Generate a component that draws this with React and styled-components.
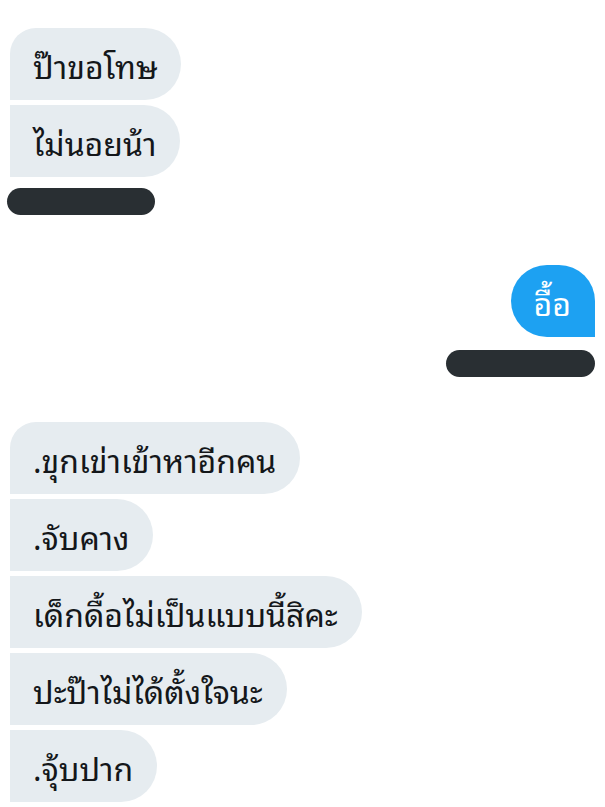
import React from "react";
import styled, { createGlobalStyle } from "styled-components";

const GlobalStyle = createGlobalStyle`
  html, body {
    margin: 0;
    padding: 0;
    background: #ffffff;
  }
  body {
    font-family: "Noto Sans Thai Looped", "Noto Sans", sans-serif;
  }
`;

const Page = styled.div`
  width: 605px;
  height: 807px;
  overflow: hidden;
  display: flex;
  flex-direction: column;
  padding-top: 28px;
  box-sizing: border-box;
`;

const Group = styled.div`
  display: flex;
  flex-direction: column;
  align-items: ${(p) => (p.$mine ? "flex-end" : "flex-start")};
  gap: 5px;
  padding: ${(p) => (p.$mine ? "0 10px 0 0" : "0 0 0 10px")};
  margin-bottom: ${(p) => p.$after || 0}px;
`;

const Bubble = styled.div`
  height: 72px;
  box-sizing: border-box;
  display: flex;
  align-items: center;
  padding: 0 24px 0 23px;
  font-size: 32px;
  white-space: nowrap;
  color: ${(p) => (p.$mine ? "#ffffff" : "#14171a")};
  background: ${(p) => (p.$mine ? "#1da1f2" : "#e6ecf0")};
  border-radius: ${(p) =>
    p.$mine
      ? "36px 36px 0 36px"
      : p.$first
      ? "26px 36px 36px 0"
      : "0 36px 36px 0"};
`;

const Meta = styled.div`
  width: ${(p) => p.$w}px;
  height: 27px;
  border-radius: 14px;
  background: #292f33;
  margin: ${(p) => (p.$mine ? "8px 0 0 0" : "6px 0 0 -3px")};
`;

const App = () => {
  return (
    <>
      <GlobalStyle />
      <Page>
        <Group $after={50}>
          <Bubble $first>ป๊าขอโทษ</Bubble>
          <Bubble>ไม่นอยน้า</Bubble>
          <Meta $w={148} />
        </Group>
        <Group $mine $after={45}>
          <Bubble $mine>อื้อ</Bubble>
          <Meta $mine $w={149} />
        </Group>
        <Group>
          <Bubble $first>.ขุกเข่าเข้าหาอีกคน</Bubble>
          <Bubble>.จับคาง</Bubble>
          <Bubble>เด็กดื้อไม่เป็นแบบนี้สิคะ</Bubble>
          <Bubble>ปะป๊าไม่ได้ตั้งใจนะ</Bubble>
          <Bubble>.จุ้บปาก</Bubble>
        </Group>
      </Page>
    </>
  );
};

export default App;
